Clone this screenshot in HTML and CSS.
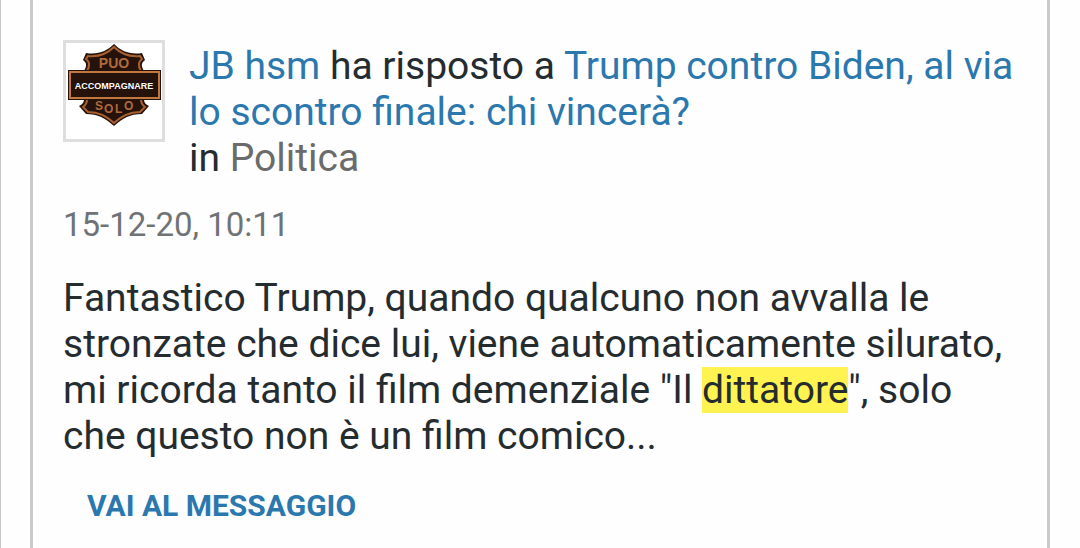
FILE: index.html
```html
<!DOCTYPE html>
<html lang="it">
<head>
  <meta charset="UTF-8">
  <meta name="viewport" content="width=device-width, initial-scale=1.0">
  <title>Risultati della ricerca</title>
  <link rel="stylesheet" href="styles.css">
</head>
<body>
  <main class="results">
    <article class="post">
      <header class="post-header">
        <a href="#" class="avatar">
          <svg viewBox="0 0 96 96" role="img" aria-label="Avatar di JB hsm">
            <!-- Shield -->
            <path d="M48 1 C55 8 64 12 76 10 L79 17 C75 20 75 23 78 28 V56 C78 59 79 61 83 63 L76 71 C64 71 57 75 48 83 C39 75 32 71 20 71 L13 63 C17 61 18 59 18 56 V28 C21 23 21 20 17 17 L20 10 C32 12 41 8 48 1 Z" fill="#24120b"/>
            <path d="M48 4 C55 11 64 14 74 13 L76 16 C72 19 72 23 75 28 V56 C75 60 76 62 79 64 L74 69 C63 69 56 73 48 80 C40 73 33 69 22 69 L17 64 C20 62 21 60 21 56 V28 C24 23 24 19 20 16 L22 13 C32 14 41 11 48 4 Z" fill="#24120b" stroke="#a9602f" stroke-width="2"/>
            <text x="48" y="25" class="logo-text">PUO</text>
            <text x="29 38 49 58" y="67 70 70 67" class="logo-solo">SOLO</text>
            <!-- Bar -->
            <rect x="2" y="27" width="93" height="30" fill="#24120b"/>
            <rect x="4" y="29" width="89" height="26" fill="#24120b" stroke="#c0783f" stroke-width="2"/>
            <text x="48" y="46" class="logo-name">ACCOMPAGNARE</text>
          </svg>
        </a>
        <div class="post-title">
          <a href="#">JB hsm</a> ha risposto a <a href="#">Trump contro Biden, al via lo scontro finale: chi vincerà?</a>
          <div>in <a href="#" class="forum">Politica</a></div>
        </div>
      </header>

      <time class="post-date" datetime="2020-12-15T10:11">15-12-20, 10:11</time>

      <p class="post-text">Fantastico Trump, quando qualcuno non avvalla le stronzate che dice lui, viene automaticamente silurato, mi ricorda tanto il film demenziale "Il <mark>dittatore</mark>", solo che questo non è un film comico...</p>

      <a href="#" class="go-to-post">VAI AL MESSAGGIO</a>
    </article>
  </main>
</body>
</html>
```
FILE: styles.css
```css
* {
  box-sizing: border-box;
}

body {
  margin: 0;
  background: #fefefe;
  color: #252c2f;
  font-family: Roboto, sans-serif;
  font-size: 39px;
  line-height: 46px;
}

a {
  color: #2b78ae;
  text-decoration: none;
}

.results {
  min-height: 100vh;
  padding: 0 30px 0 29px;
  border-left: 1px solid #c8c8ca;
  display: flex;
}

.post {
  flex: 1;
  padding: 40px 30px 16px;
  border: solid #c9cbce;
  border-width: 0 3px;
}

.post-header {
  display: flex;
  align-items: flex-start;
  gap: 24px;
}

.avatar {
  flex: none;
  width: 102px;
  height: 102px;
  border: 3px solid #dedede;
  background: #fff;
}

.avatar svg {
  display: block;
  width: 100%;
  height: 100%;
}

.logo-text,
.logo-solo {
  fill: #b06a3c;
  font: bold 14px "Liberation Sans", sans-serif;
}

.logo-solo {
  font-size: 12px;
}

.logo-text,
.logo-name {
  text-anchor: middle;
}

.logo-name {
  fill: #fff;
  font: bold 9px "Liberation Sans", sans-serif;
}

.post-title {
  flex: 1;
  padding-top: 3px;
}

.forum {
  color: #6b6b6b;
}

.post-date {
  display: block;
  margin-top: 21px;
  color: #707375;
  font-size: 33px;
}

.post-text {
  margin: 27px 0 0;
}

mark {
  background: #fff352;
  color: inherit;
}

.go-to-post {
  display: inline-block;
  margin-top: 24px;
  padding: 0 24px;
  font-size: 30px;
  font-weight: bold;
}
```
